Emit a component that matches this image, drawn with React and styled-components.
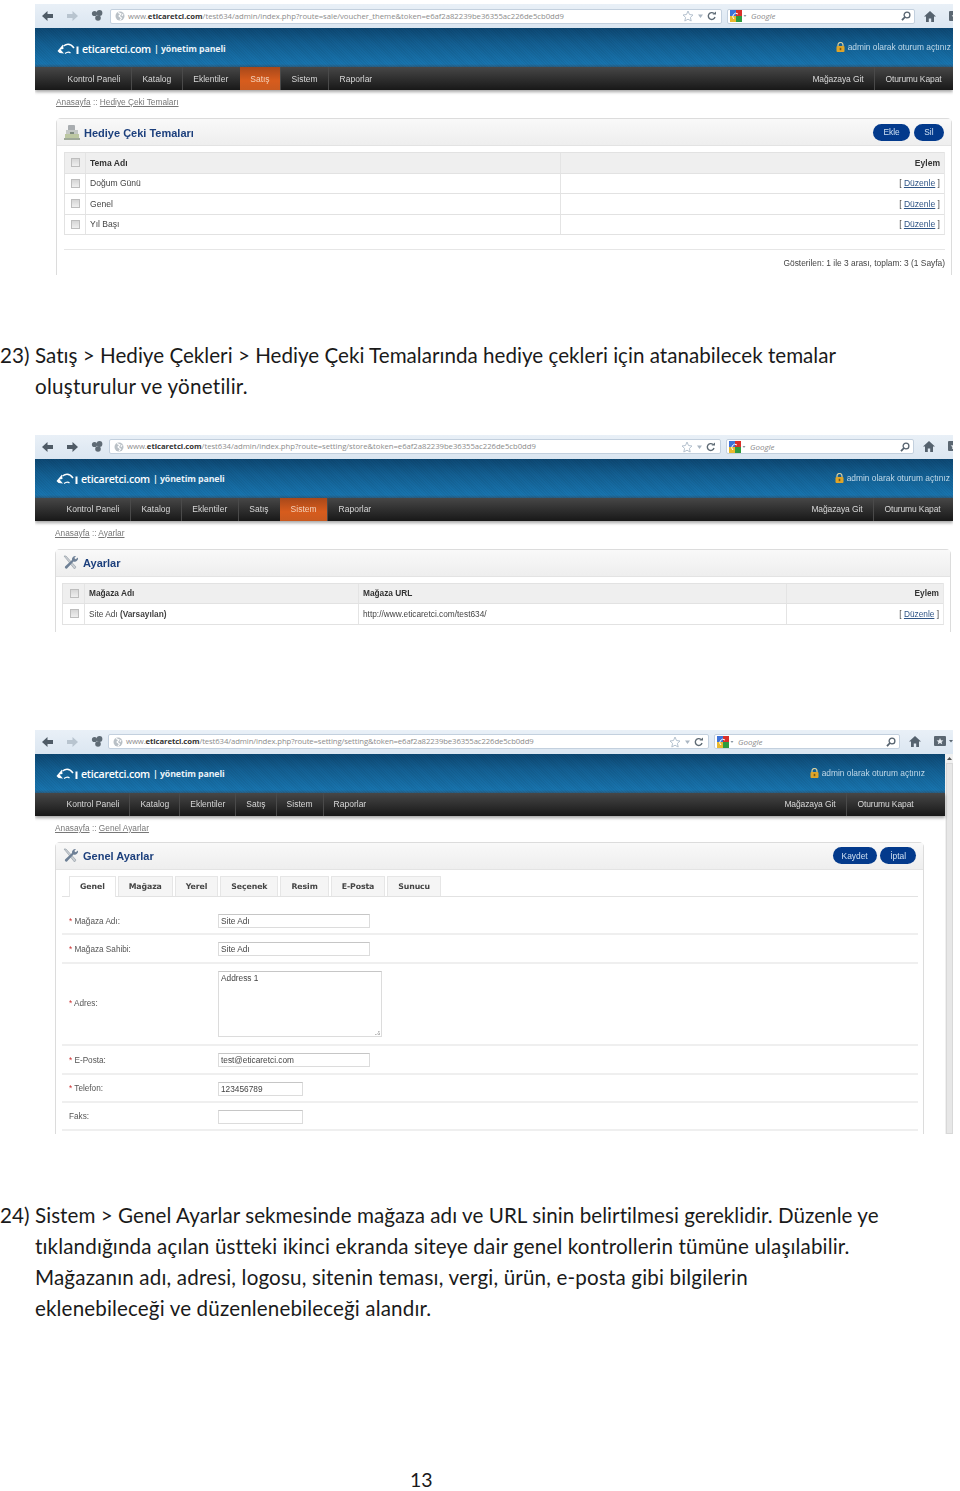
import React from 'react';
import styled, { createGlobalStyle } from 'styled-components';

const Global = createGlobalStyle`
  html, body { margin: 0; padding: 0; background: #fff; }
  body { font-family: "Liberation Sans", Arial, sans-serif; }
`;

const Doc = styled.div`
  width: 960px; height: 1491px; overflow: hidden; padding-top: 4px; box-sizing: border-box;
  display: flex; flex-direction: column;
`;
const Shot = styled.section`
  margin-left: 35px; margin-top: ${p => p.$top || 0}px; width: 918px; height: ${p => p.$h}px;
  overflow: hidden; flex: none; display: flex; flex-direction: column; filter: blur(0.35px);
`;
const Chrome = styled.div`
  height: 24px; flex: none; display: flex; align-items: center; white-space: nowrap;
  background: linear-gradient(#e9f0f7, #dbe6f1);
`;
const BrowserNav = styled.div`
  width: ${p => p.$w}px; flex: none; display: flex; align-items: center; padding-left: 7px; gap: 13.5px; box-sizing: border-box;
`;
const UrlBar = styled.div`
  width: ${p => p.$w}px; height: 15px; flex: none; box-sizing: border-box; background: #fff; border: 1px solid #c3d0de;
  border-radius: 2px; display: flex; align-items: center; padding: 0 3px 0 4px; gap: 3px;
`;
const UrlText = styled.span`
  flex: 1; font: 7.72px/13px "Open Sans", sans-serif; color: #8c8c8c; letter-spacing: ${p => p.$ls}px;
  b { color: #333; font-weight: 700; }
`;
const SearchBar = styled(UrlBar)`margin-left: 5px; gap: 3px; padding-left: 2px;`;
const SearchText = styled.span`
  flex: 1; font: italic 8px/12px "Open Sans", sans-serif; color: #8a8a8a; margin-left: 1px;
`;
const Tools = styled.div`display: flex; align-items: center; margin-left: 9px; gap: 13px; flex: none;`;

const ShotBody = styled.div`display: flex; flex: 1; min-height: 0;`;
const Page = styled.div`flex: 1; min-width: 0; display: flex; flex-direction: column;`;
const Scrollbar = styled.div`
  width: 8px; flex: none; background: #f0f0f0; display: flex; flex-direction: column; align-items: center; padding-top: 3px;
  box-sizing: border-box; gap: 3px;
`;
const ScrollThumb = styled.div`width: 7px; flex: 1; background: #e7e7e7; border: 1px solid #d8d8d8; box-sizing: border-box;`;

const Header = styled.header`
  height: 39px; flex: none; box-sizing: border-box; display: flex; align-items: center; justify-content: space-between;
  padding: 0 ${p => p.$right}px 0 ${p => p.$left}px; white-space: nowrap;
  background:
    repeating-linear-gradient(45deg, rgba(0,0,0,.05) 0 1px, transparent 1px 2px),
    linear-gradient(#0d4873, #135f92 40%, #1874ae 92%, #2a5f85);
`;
const Logo = styled.div`display: flex; align-items: center; color: #fff; font: 600 10.2px "Open Sans", sans-serif; margin-top: 2px;`;
const LogoText = styled.span`margin-left: 3px; font-size: 10.6px; letter-spacing: -0.25px;`;
const LogoSub = styled.span`margin-left: 3px; font-weight: 700; font-size: 8.8px; letter-spacing: -0.1px; color: #e8f2f8;`;
const AdminInfo = styled.div`display: flex; align-items: center; gap: 3px; font-size: 8.4px; color: #c0d8e8; margin-top: -1px;`;

const Nav = styled.nav`
  height: 23px; flex: none; display: flex; justify-content: space-between; padding: 0 ${p => p.$right}px 0 ${p => p.$left}px;
  background: linear-gradient(#474747, #181818); box-shadow: 0 2px 3px rgba(0,0,0,.35); position: relative; white-space: nowrap;
`;
const NavGroup = styled.div`display: flex;`;
const NavItem = styled.div`
  display: flex; align-items: center; padding: 0 ${p => p.$pad || 10.5}px; font-size: 8.5px; color: ${p => p.$active ? '#f3d3bd' : '#d8d8d8'};
  background: ${p => p.$active ? 'linear-gradient(#a8481a, #d75c1d 60%, #c95a20)' : 'none'};
  border-right: 1px solid ${p => p.$last ? 'transparent' : '#4a4a4a'};
`;
const SideNavItem = styled(NavItem)`letter-spacing: -0.12px;`;
const Crumb = styled.div`
  height: ${p => p.$h}px; flex: none; box-sizing: border-box; padding: 6px 0 0 ${p => p.$left}px; font-size: 8.3px; line-height: 12px; color: #888;
  a { color: #777; text-decoration: underline; }
`;
const Panel = styled.div`
  margin: 0 ${p => p.$right}px 0 ${p => p.$left}px; flex: 1; border: 1px solid #dcdcdc; border-bottom: 0; border-radius: 5px 5px 0 0;
  display: flex; flex-direction: column; min-height: 0;
`;
const PanelHead = styled.div`
  height: 26px; flex: none; display: flex; align-items: center; justify-content: space-between; padding: 0 ${p => p.$pr}px 0 7px;
  background: linear-gradient(#f9f9f9, #eeeeee); border-bottom: 1px solid #e3e3e3;
`;
const PanelTitle = styled.h1`
  margin: 1px 0 0; display: flex; align-items: center; gap: 4px; font-size: 11px; font-weight: 700; color: #1c3f7c;
`;
const Buttons = styled.div`display: flex; gap: 3.5px;`;
const Button = styled.div`
  height: 17px; padding: 0 ${p => p.$pad}px; border-radius: 9px; background: #033a8c; color: #cfe0f2; font-size: 8.4px; display: flex; align-items: center;
`;
const PanelBody = styled.div`padding: 6px ${p => p.$right || 6}px 0 ${p => p.$left}px;`;
const Table = styled.div`border: 1px solid #e2e2e2; border-top: 0; border-right: 1px solid #e8e8e8;`;
const Row = styled.div`
  display: grid; grid-template-columns: ${p => p.$cols}; height: 20.5px; box-sizing: border-box; border-top: 1px solid #e2e2e2;
  background: ${p => p.$head ? '#efefef' : '#fff'}; font-size: ${p => p.$fs || 8.55}px; font-weight: ${p => p.$head ? 700 : 400}; color: ${p => p.$head ? '#333' : '#444'};
`;
const Cell = styled.div`
  display: flex; align-items: center; justify-content: ${p => p.$end ? 'flex-end' : p.$center ? 'center' : 'flex-start'};
  padding: 0 ${p => p.$center ? 0 : 4}px; border-left: 1px solid ${p => p.$first ? 'transparent' : '#e4e4e4'}; white-space: pre;
  a { color: #2f5586; text-decoration: underline; }
`;
const Check = styled.span`
  width: 9px; height: 9px; box-sizing: border-box; border: 1px solid #bdbdbd; background: linear-gradient(#d6d6d6, #efefef); display: block;
`;
const Rule = styled.div`height: 1px; background: #e6e6e6; margin-top: 14px;`;
const Pagination = styled.div`text-align: right; font-size: 8.4px; color: #444; margin: 7px 0 0 0; line-height: 12px;`;

const Tabs = styled.div`
  display: flex; gap: 2px; height: 21px; box-sizing: border-box; padding-left: 7px; border-bottom: 1px solid #e2e2e2;
`;
const Tab = styled.div`
  display: flex; align-items: center; padding: 0 10px; font: 700 7.8px "DejaVu Sans", sans-serif; color: #444;
  border: 1px solid #e6e6e6; border-bottom: 0; letter-spacing: -0.1px; background: ${p => p.$active ? '#fff' : '#f5f5f5'};
  height: ${p => p.$active ? 21 : 20}px; box-sizing: border-box;
`;
const FormRow = styled.div`
  height: ${p => p.$h}px; box-sizing: border-box; display: flex; align-items: center; border-bottom: 2px solid #efefef; padding: ${p => p.$pt ?? 2}px 0 0 7px;
  font-size: 8.2px; color: #555;
`;
const FieldLabel = styled.label`
  width: 149px; flex: none;
  i { color: #c33; font-style: normal; }
`;
const Input = styled.div`
  width: ${p => p.$w}px; height: 14px; box-sizing: border-box; border: 1px solid #dcdcdc; border-top-color: #c6c6c6; padding-left: 2px;
  font-size: 8.3px; line-height: 12px; color: #444;
`;
const TextArea = styled(Input)`
  height: 66px; position: relative;
  &::after { content: ""; position: absolute; right: 1px; bottom: 1px; width: 5px; height: 5px;
    background: linear-gradient(135deg, transparent 50%, #bbb 50%, #eee 70%, #bbb 80%); }
`;

const Para = styled.div`
  display: flex; margin-top: ${p => p.$top}px; flex: none; font: 400 20.6px/31.3px Lato, sans-serif; font-variant-ligatures: none; color: #1a1a1a; white-space: nowrap;
`;
const ParaNum = styled.span`width: 35px; flex: none;`;
const ParaText = styled.div``;
const ParaLine = styled.div`letter-spacing: ${p => p.$ls}px;`;
const PageNo = styled.div`
  margin-top: 139px; padding-left: 410px; flex: none; font: 400 19.5px/31.3px Lato, sans-serif; color: #1a1a1a;
`;

const Back = ({ dim }) => (
  <svg width="11" height="10" viewBox="0 0 11 10"><path d="M5.5 0 L0 5 L5.5 10 V7 H11 V3 H5.5 Z" fill={dim ? '#b8c4cf' : '#4f5b66'} /></svg>
);
const Forward = ({ dim }) => (
  <svg width="11" height="10" viewBox="0 0 11 10"><path d="M5.5 0 L11 5 L5.5 10 V7 H0 V3 H5.5 Z" fill={dim ? '#b8c4cf' : '#4f5b66'} /></svg>
);
const Badge = () => (
  <svg width="12" height="12" viewBox="0 0 12 12" fill="#5f6b75"><circle cx="3.5" cy="3.5" r="2.6" /><circle cx="8.5" cy="3" r="2.9" /><circle cx="7" cy="8" r="2.8" /></svg>
);
const Globe = () => (
  <svg width="10" height="10" viewBox="0 0 10 10"><circle cx="5" cy="5" r="4.5" fill="#b9c0c6" /><path d="M3 1.5 L6 3 L4 5 L6.5 7 L5 9 M8 3 L7 5" stroke="#fff" strokeWidth="1.1" fill="none" /></svg>
);
const UrlTools = () => (
  <svg width="36" height="12" viewBox="0 0 36 12" fill="none">
    <path d="M6 1 L7.5 4.5 L11 5 L8.4 7.4 L9.2 11 L6 9.2 L2.8 11 L3.6 7.4 L1 5 L4.5 4.5 Z" stroke="#b5c2cf" />
    <path d="M16 4.5 H21 L18.5 8 Z" fill="#aab6c2" />
    <path d="M32 3.5 A3.4 3.4 0 1 0 33 7" stroke="#5f6b75" strokeWidth="1.4" /><path d="M30.5 4.5 H34 V1.5 Z" fill="#5f6b75" />
  </svg>
);
const GoogleBadge = () => (
  <svg width="17" height="12" viewBox="0 0 17 12">
    <rect x="0" y="0" width="6" height="6" fill="#3f72d8" /><rect x="6" y="0" width="6" height="6" fill="#d9302a" />
    <rect x="0" y="6" width="6" height="6" fill="#e9b92e" /><rect x="6" y="6" width="6" height="6" fill="#2f9a3f" />
    <path d="M4 9 A3 3 0 1 1 8 4" stroke="#fff" strokeWidth="1" fill="none" />
    <path d="M13.5 5 H16.5 L15 7 Z" fill="#8b97a3" />
  </svg>
);
const Magnifier = () => (
  <svg width="10" height="10" viewBox="0 0 10 10" fill="none"><circle cx="6" cy="4" r="2.9" stroke="#55626e" strokeWidth="1.3" /><path d="M4 6 L1 9.2" stroke="#55626e" strokeWidth="1.8" /></svg>
);
const Home = () => (
  <svg width="12" height="11" viewBox="0 0 12 11" fill="#55626e"><path d="M6 0 L12 5.5 H10 V11 H7.2 V7.5 H4.8 V11 H2 V5.5 H0 Z" /></svg>
);
const Bookmarks = () => (
  <svg width="20" height="11" viewBox="0 0 20 11">
    <rect width="12" height="10" rx="1" fill="#5b6772" /><path d="M6 2 L7 4.2 L9.4 4.4 L7.6 6 L8.2 8.3 L6 7 L3.8 8.3 L4.4 6 L2.6 4.4 L5 4.2 Z" fill="#e8edf2" />
    <path d="M15 4 H19 L17 6.5 Z" fill="#5b6772" />
  </svg>
);
const LogoMark = () => (
  <svg width="22" height="12" viewBox="0 0 22 12" fill="none">
    <path d="M0.5 8 L6 1.5 L6.5 6 L3.5 6.5 L7 10.5 L2.5 10 Z" fill="#fff" />
    <path d="M6.5 3 C10 0.5 14 1 17 5" stroke="#fff" strokeWidth="1.5" />
    <path d="M8 10.5 C10 9 12 8.5 13.5 10" stroke="#fff" strokeWidth="1.1" />
    <rect x="19.5" y="3.5" width="2" height="7.5" fill="#fff" />
  </svg>
);
const Lock = () => (
  <svg width="9" height="10" viewBox="0 0 9 10"><path d="M2 4.5 V3 A2.5 2.5 0 0 1 7 3 V4.5" stroke="#d8cfa0" strokeWidth="1.2" fill="none" /><rect x="0.5" y="4" width="8" height="6" rx="1" fill="#dfa52a" /><rect x="3.7" y="5.8" width="1.6" height="2.4" fill="#7a5a12" /></svg>
);
const GiftIcon = () => (
  <svg width="16" height="17" viewBox="0 0 16 17">
    <rect x="4" y="1" width="7" height="6" rx="1" fill="#a9adb0" /><rect x="2" y="6" width="12" height="5" fill="#c4c8c6" />
    <rect x="1" y="10" width="14" height="5" fill="#bcc7a2" /><rect x="6" y="8" width="4" height="2" fill="#7f8a80" />
    <rect x="0" y="14" width="16" height="2" fill="#9fa99a" />
  </svg>
);
const ToolsIcon = () => (
  <svg width="16" height="16" viewBox="0 0 16 16" fill="none">
    <path d="M1 1 L3 1 L13 12 L11.5 14 Z" fill="#c9ced3" stroke="#8f98a1" strokeWidth=".6" />
    <path d="M15 2.5 A3.4 3.4 0 0 1 10.5 6.5 L4 13.5 A1.5 1.5 0 0 1 2 11.5 L9 5 A3.4 3.4 0 0 1 13 1 L11.3 3 L12.6 4.3 Z" fill="#6e8096" />
  </svg>
);

const BrowserBar = ({ url, navW, urlW, searchW, forwardActive, urlLs = -0.03 }) => (
  <Chrome>
    <BrowserNav $w={navW}>
      <Back /><Forward dim={!forwardActive} /><Badge />
    </BrowserNav>
    <UrlBar $w={urlW}>
      <Globe />
      <UrlText $ls={urlLs}>www.<b>eticaretci.com</b>{url}</UrlText>
      <UrlTools />
    </UrlBar>
    <SearchBar $w={searchW}>
      <GoogleBadge />
      <SearchText>Google</SearchText>
      <Magnifier />
    </SearchBar>
    <Tools><Home /><Bookmarks /></Tools>
  </Chrome>
);

const AdminHeader = ({ left, right }) => (
  <Header $left={left} $right={right}>
    <Logo><LogoMark /><LogoText>eticaretci.com</LogoText><LogoSub>| yönetim paneli</LogoSub></Logo>
    <AdminInfo><Lock />admin olarak oturum açtınız</AdminInfo>
  </Header>
);

const menu = ['Kontrol Paneli', 'Katalog', 'Eklentiler', 'Satış', 'Sistem', 'Raporlar'];
const AdminNav = ({ active, left, right, pad }) => (
  <Nav $left={left} $right={right}>
    <NavGroup>
      {menu.map((m, i) => <NavItem key={m} $pad={pad} $active={m === active} $last={i === 5 || menu[i + 1] === active}>{m}</NavItem>)}
    </NavGroup>
    <NavGroup>
      <SideNavItem>Mağazaya Git</SideNavItem>
      <SideNavItem $last>Oturumu Kapat</SideNavItem>
    </NavGroup>
  </Nav>
);

const cols1 = '20px 475px 1fr';
const cols2 = '21px 274px 428px 1fr';
const Edit = () => <Cell $end>[ <a>Düzenle</a> ]</Cell>;

export default function App() {
  return (
    <Doc>
      <Global />
      <Shot $h={271}>
        <BrowserBar navW={75} urlW={612} searchW={188} url="/test634/admin/index.php?route=sale/voucher_theme&token=e6af2a82239be36355ac226de5cb0dd9" />
        <ShotBody>
          <Page>
            <AdminHeader left={22} right={2} />
            <AdminNav active="Satış" left={22} right={0} />
            <Crumb $h={28} $left={21}><a>Anasayfa</a> :: <a>Hediye Çeki Temaları</a></Crumb>
            <Panel $left={21} $right={1}>
              <PanelHead $pr={7}>
                <PanelTitle><GiftIcon />Hediye Çeki Temaları</PanelTitle>
                <Buttons><Button $pad={10.5}>Ekle</Button><Button $pad={10.5}>Sil</Button></Buttons>
              </PanelHead>
              <PanelBody $left={7}>
                <Table>
                  <Row $cols={cols1} $head><Cell $center $first><Check /></Cell><Cell>Tema Adı</Cell><Cell $end>Eylem</Cell></Row>
                  {['Doğum Günü', 'Genel', 'Yıl Başı'].map(n => (
                    <Row key={n} $cols={cols1}><Cell $center $first><Check /></Cell><Cell>{n}</Cell><Edit /></Row>
                  ))}
                </Table>
                <Rule />
                <Pagination>Gösterilen: 1 ile 3 arası, toplam: 3 (1 Sayfa)</Pagination>
              </PanelBody>
            </Panel>
          </Page>
        </ShotBody>
      </Shot>

      <Para $top={65}>
        <ParaNum>23)</ParaNum>
        <ParaText>
          <ParaLine $ls={0.02}>Satış &gt; Hediye Çekleri &gt; Hediye Çeki Temalarında hediye çekleri için atanabilecek temalar</ParaLine>
          <ParaLine $ls={0.24}>oluşturulur ve yönetilir.</ParaLine>
        </ParaText>
      </Para>

      <Shot $top={32} $h={197}>
        <BrowserBar forwardActive navW={74} urlW={612} searchW={188} url="/test634/admin/index.php?route=setting/store&token=e6af2a82239be36355ac226de5cb0dd9" />
        <ShotBody>
          <Page>
            <AdminHeader left={21} right={3} />
            <AdminNav active="Sistem" left={21} right={1} />
            <Crumb $h={28} $left={20}><a>Anasayfa</a> :: <a>Ayarlar</a></Crumb>
            <Panel $left={20} $right={2}>
              <PanelHead $pr={7}>
                <PanelTitle><ToolsIcon />Ayarlar</PanelTitle>
              </PanelHead>
              <PanelBody $left={6}>
                <Table>
                  <Row $cols={cols2} $head $fs={8.3}><Cell $center $first><Check /></Cell><Cell>Mağaza Adı</Cell><Cell>Mağaza URL</Cell><Cell $end>Eylem</Cell></Row>
                  <Row $cols={cols2} $fs={8.3}><Cell $center $first><Check /></Cell><Cell>Site Adı <b>(Varsayılan)</b></Cell><Cell>http://www.eticaretci.com/test634/</Cell><Edit /></Row>
                </Table>
              </PanelBody>
            </Panel>
          </Page>
        </ShotBody>
      </Shot>

      <Shot $top={98} $h={404}>
        <BrowserBar navW={73} urlW={601} searchW={186} urlLs={-0.097} url="/test634/admin/index.php?route=setting/setting&token=e6af2a82239be36355ac226de5cb0dd9" />
        <ShotBody>
          <Page>
            <AdminHeader left={21} right={20} />
            <AdminNav active="" left={21.5} right={20} pad={10} />
            <Crumb $h={26} $left={20}><a>Anasayfa</a> :: <a>Genel Ayarlar</a></Crumb>
            <Panel $left={20} $right={21}>
              <PanelHead $pr={7}>
                <PanelTitle><ToolsIcon />Genel Ayarlar</PanelTitle>
                <Buttons><Button $pad={9}>Kaydet</Button><Button $pad={10}>İptal</Button></Buttons>
              </PanelHead>
              <PanelBody $left={6} $right={5}>
                <Tabs>
                  <Tab $active>Genel</Tab><Tab>Mağaza</Tab><Tab>Yerel</Tab><Tab>Seçenek</Tab><Tab>Resim</Tab><Tab>E-Posta</Tab><Tab>Sunucu</Tab>
                </Tabs>
                <FormRow $h={38} $pt={13}><FieldLabel><i>*</i> Mağaza Adı:</FieldLabel><Input $w={152}>Site Adı</Input></FormRow>
                <FormRow $h={29}><FieldLabel><i>*</i> Mağaza Sahibi:</FieldLabel><Input $w={152}>Site Adı</Input></FormRow>
                <FormRow $h={82} $pt={0}><FieldLabel><i>*</i> Adres:</FieldLabel><TextArea $w={164}>Address 1</TextArea></FormRow>
                <FormRow $h={29}><FieldLabel><i>*</i> E-Posta:</FieldLabel><Input $w={152}>test@eticaretci.com</Input></FormRow>
                <FormRow $h={28}><FieldLabel><i>*</i> Telefon:</FieldLabel><Input $w={85}>123456789</Input></FormRow>
                <FormRow $h={28}><FieldLabel>Faks:</FieldLabel><Input $w={85} /></FormRow>
              </PanelBody>
            </Panel>
          </Page>
          <Scrollbar>
            <svg width="5" height="3" viewBox="0 0 5 3"><path d="M2.5 0 L5 3 H0 Z" fill="#555" /></svg>
            <ScrollThumb />
          </Scrollbar>
        </ShotBody>
      </Shot>

      <Para $top={66}>
        <ParaNum>24)</ParaNum>
        <ParaText>
          <ParaLine $ls={0.06}>Sistem &gt; Genel Ayarlar sekmesinde mağaza adı ve URL sinin belirtilmesi gereklidir. Düzenle ye</ParaLine>
          <ParaLine $ls={0.14}>tıklandığında açılan üstteki ikinci ekranda siteye dair genel kontrollerin tümüne ulaşılabilir.</ParaLine>
          <ParaLine $ls={0.16}>Mağazanın adı, adresi, logosu, sitenin teması, vergi, ürün, e-posta gibi bilgilerin</ParaLine>
          <ParaLine $ls={0.14}>eklenebileceği ve düzenlenebileceği alandır.</ParaLine>
        </ParaText>
      </Para>
      <PageNo>13</PageNo>
    </Doc>
  );
}
